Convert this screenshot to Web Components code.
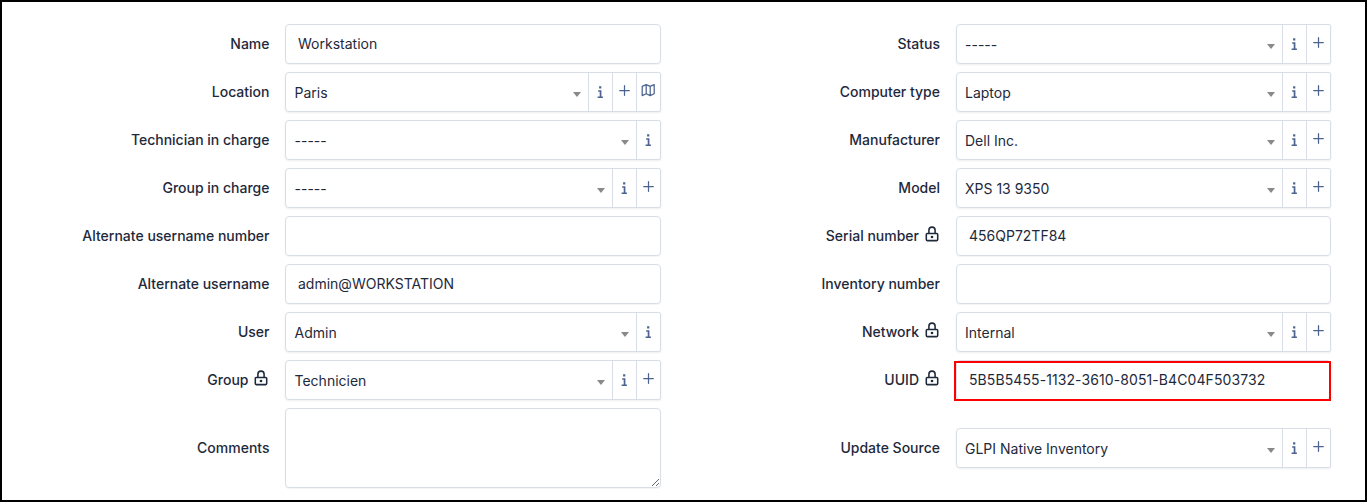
<!DOCTYPE html>
<html lang="en">
<head>
<meta charset="utf-8">
<title>Computer</title>
<style>
html,body{margin:0;height:100%;background:#fff}
body{font:14px/20px Inter,"Liberation Sans",sans-serif;color:#1e293b;overflow:hidden}
</style>
</head>
<body>
<asset-form>
  <form-column slot="left">
    <form-row label="Name"><text-field>Workstation</text-field></form-row>
    <form-row label="Location"><select-field actions="info plus map">Paris</select-field></form-row>
    <form-row label="Technician in charge"><select-field actions="info">-----</select-field></form-row>
    <form-row label="Group in charge"><select-field actions="info plus">-----</select-field></form-row>
    <form-row label="Alternate username number"><text-field></text-field></form-row>
    <form-row label="Alternate username"><text-field>admin@WORKSTATION</text-field></form-row>
    <form-row label="User"><select-field actions="info">Admin</select-field></form-row>
    <form-row label="Group" locked><select-field actions="info plus">Technicien</select-field></form-row>
    <form-row label="Comments" tall><comment-field></comment-field></form-row>
  </form-column>
  <form-column slot="right">
    <form-row label="Status"><select-field actions="info plus">-----</select-field></form-row>
    <form-row label="Computer type"><select-field actions="info plus">Laptop</select-field></form-row>
    <form-row label="Manufacturer"><select-field actions="info plus">Dell Inc.</select-field></form-row>
    <form-row label="Model"><select-field actions="info plus">XPS 13 9350</select-field></form-row>
    <form-row label="Serial number" locked><text-field>456QP72TF84</text-field></form-row>
    <form-row label="Inventory number"><text-field></text-field></form-row>
    <form-row label="Network" locked><select-field actions="info plus">Internal</select-field></form-row>
    <form-row label="UUID" locked><text-field marked>5B5B5455-1132-3610-8051-B4C04F503732</text-field></form-row>
    <form-row label="Update Source" tall><select-field actions="info plus">GLPI Native Inventory</select-field></form-row>
  </form-column>
</asset-form>
<script>
const define = (name, render) => customElements.define(name, class extends HTMLElement {
  constructor() {
    super();
    this.attachShadow({ mode: 'open' });
  }
  connectedCallback() {
    this.shadowRoot.innerHTML = render(this);
  }
});

const icons = {
  info: '<svg width="23" height="38" viewBox="0 0 23 38"><path d="M10.100 13.300h2.200v2.200h-2.200zM9.200 17.300h3.200v6.200h1.500v1.400H8.600v-1.400h2.100v-4.800H9.200z" fill="currentColor"/></svg>',
  plus: '<svg width="23" height="38" viewBox="0 0 23 38"><path d="M11.500 12.700v9.600M6.700 17.500h9.600" fill="none" stroke="currentColor" stroke-width="1.25" stroke-linecap="round"/></svg>',
  map: '<svg width="23" height="38" viewBox="0 0 23 38"><path d="M5.200 13.400l4-1.800 4 1.800 4-1.800v9.200l-4 1.800-4-1.800-4 1.800zM9.200 11.600v9.200M13.200 13.400v9.200" fill="none" stroke="currentColor" stroke-width="1.25" stroke-linejoin="round"/></svg>',
  lock: '<svg width="14" height="17" viewBox="0 0 14 17"><path d="M2.300 7.400h9.400q1 0 1 1v5.200q0 1-1 1H2.300q-1 0-1-1V8.400q0-1 1-1zM3.900 7.400V4.200a3.100 3.100 0 0 1 6.200 0v3.200" fill="none" stroke="currentColor" stroke-width="1.55" stroke-linejoin="round"/><circle cx="7" cy="11" r="1.350" fill="currentColor"/></svg>'
};

define('asset-form', () => `
  <style>
    :host{display:grid;grid-template-columns:659px 670px;box-sizing:border-box;height:502px;border:2px solid #000;padding-top:22px;align-items:start}
    ::slotted([slot="right"]){--field-width:375px;--label-gap:16px;--value-inset:8px}
  </style>
  <slot name="left"></slot><slot name="right"></slot>`);

define('form-column', () => `
  <style>:host{display:flex;flex-direction:column;gap:8px}</style>
  <slot></slot>`);

define('form-row', el => `
  <style>
    :host{display:flex;align-items:center;height:40px}
    :host([tall]){height:80px}
    .label{flex:1;display:flex;justify-content:flex-end;padding-right:var(--label-gap,15.5px);font-weight:500;white-space:nowrap}
    svg{flex:none;margin:0 1.500px 0 5.500px}
    .field{flex:none;width:var(--field-width,376px)}
  </style>
  <div class="label"><span>${el.getAttribute('label')}</span>${el.hasAttribute('locked') ? icons.lock : ''}</div>
  <div class="field"><slot></slot></div>`);

define('text-field', () => `
  <style>
    :host{display:flex;align-items:center;position:relative;box-sizing:border-box;height:40px;border:1px solid #d9dee6;border-radius:4px;padding:0 12px;background:#fff;box-shadow:0 1px 1px rgba(30,41,59,.05)}
    :host([marked]){letter-spacing:.09px}
    :host([marked])::after{content:"";position:absolute;inset:0 -1px -2px -3px;border:2px solid #f00}
  </style>
  <span><slot></slot></span>`);

define('select-field', el => `
  <style>
    :host{display:flex;box-sizing:border-box;height:40px;border:1px solid #d9dee6;border-radius:4px 2px 2px 4px;background:#fff;box-shadow:0 1px 2px rgba(30,41,59,.08)}
    .value{flex:1;display:flex;align-items:center;justify-content:space-between;padding:2px 7px 0 var(--value-inset,8.500px)}
    .caret{border:solid transparent;border-width:5px 4px 0;border-top-color:#888;margin-top:3px}
    .action{flex:none;box-sizing:border-box;width:24px;height:38px;border-left:1px solid #d9dee6;color:#4c638f}
    .action svg{display:block}
  </style>
  <div class="value"><span><slot></slot></span><i class="caret"></i></div>
  ${el.getAttribute('actions').split(' ').map(name => `<div class="action">${icons[name]}</div>`).join('')}`);

define('comment-field', () => `
  <style>
    :host{display:block}
    textarea{display:block;box-sizing:border-box;width:100%;height:80px;border:1px solid #d9dee6;border-radius:4px;resize:vertical;background:#fff;outline:0;box-shadow:0 1px 1px rgba(30,41,59,.05)}
  </style>
  <textarea aria-label="Comments"></textarea>`);
</script>
</body>
</html>
